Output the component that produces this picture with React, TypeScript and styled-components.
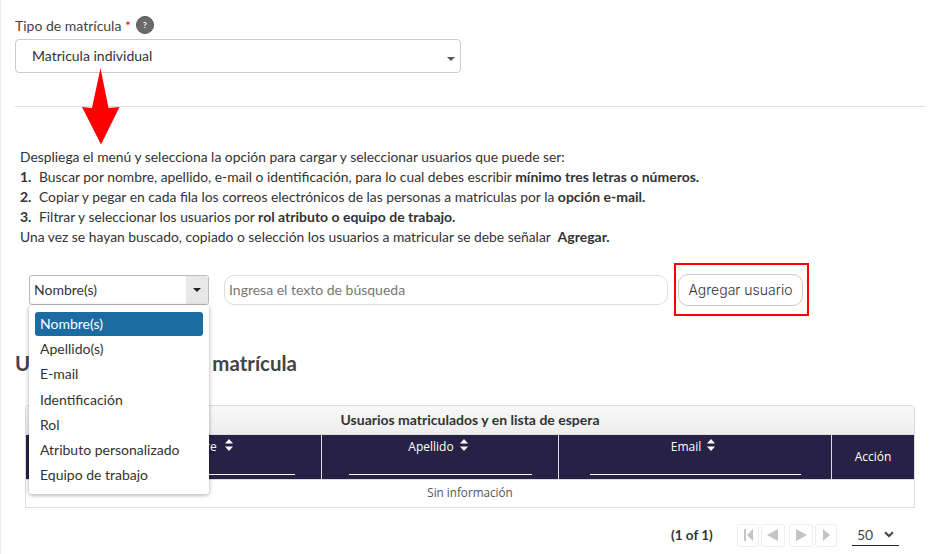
import { createGlobalStyle } from 'styled-components';
import styled from 'styled-components';

const GlobalStyle = createGlobalStyle`
    html, body {
        margin: 0;
        background: #fff;
        font-family: Lato, sans-serif;
        color: #333;
    }
`;

const options = ['Nombre(s)', 'Apellido(s)', 'E-mail', 'Identificación', 'Rol', 'Atributo personalizado', 'Equipo de trabajo'];

function SortIcon() {
    return (
        <SortSvg viewBox="0 0 8 12" width="8" height="12">
            <path d="M4 0 L8 4.6 H0 Z" fill="#fff" />
            <path d="M4 12 L8 7.4 H0 Z" fill="#fff" />
        </SortSvg>
    );
}

export default function App() {
    return (
        <Page>
            <GlobalStyle />
            <LabelRow>
                <FieldLabel>Tipo de matrícula <Req>*</Req></FieldLabel>
                <HelpBadge>?</HelpBadge>
            </LabelRow>
            <TypeSelect>
                Matricula individual
                <TypeCaret />
            </TypeSelect>
            <Divider />
            <BigArrow viewBox="0 0 40 78" width="40" height="78">
                <path d="M19.5 1 L27.5 41 L38.5 40 L20 77.5 L1 40 L11 41 Z" fill="#ff0000" />
            </BigArrow>
            <Instructions>
                <p>Despliega el menú y selecciona la opción para cargar y seleccionar usuarios que puede ser:</p>
                <p><Num>1.</Num>Buscar por nombre, apellido, e-mail o identificación, para lo cual debes escribir <b>mínimo tres letras o números.</b></p>
                <p><Num>2.</Num>Copiar y pegar en cada fila los correos electrónicos de las personas a matriculas por la <b>opción e-mail.</b></p>
                <p><Num>3.</Num>Filtrar y seleccionar los usuarios por <b>rol atributo o equipo de trabajo.</b></p>
                <p>Una vez se hayan buscado, copiado o selección los usuarios a matricular se debe señalar&nbsp; <b>Agregar.</b></p>
            </Instructions>
            <SearchRow>
                <FilterBox>
                    <FilterValue>Nombre(s)</FilterValue>
                    <FilterToggle><ToggleCaret /></FilterToggle>
                    <FilterMenu>
                        {options.map((o, i) => (
                            <FilterOption key={o} $active={i === 0}>{o}</FilterOption>
                        ))}
                    </FilterMenu>
                </FilterBox>
                <SearchInput placeholder="Ingresa el texto de búsqueda" readOnly />
                <Highlight>
                    <AddButton>Agregar usuario</AddButton>
                </Highlight>
            </SearchRow>
            <SectionTitle>Usuarios agregados a matrícula</SectionTitle>
            <TableWrap>
                <TableTitle>Usuarios matriculados y en lista de espera</TableTitle>
                <HeadRow>
                    <HeadCell $w={296} $pad={60}>
                        <HeadLabel $gap={8}>Nombre <SortIcon /></HeadLabel>
                        <FilterLine $w={183} />
                    </HeadCell>
                    <HeadCell $w={237}>
                        <HeadLabel>Apellido <SortIcon /></HeadLabel>
                        <FilterLine $w={183} />
                    </HeadCell>
                    <HeadCell $w={273}>
                        <HeadLabel>Email <SortIcon /></HeadLabel>
                        <FilterLine $w={211} />
                    </HeadCell>
                    <ActionCell>Acción</ActionCell>
                </HeadRow>
                <EmptyRow>Sin información</EmptyRow>
            </TableWrap>
            <Paginator>
                <PageInfo>(1 of 1)</PageInfo>
                <PageButtons>
                    <PageGroup>
                        <PageBtn $w={22}>
                            <svg viewBox="0 0 9 12" width="9" height="12"><path d="M0 0H2V12H0Z M9 0V12L3 6Z" fill="#c4c4c4" /></svg>
                        </PageBtn>
                        <PageBtn $w={24}>
                            <svg viewBox="0 0 12 12" width="12" height="12"><path d="M11 0V12L0 6Z" fill="#c4c4c4" /></svg>
                        </PageBtn>
                    </PageGroup>
                    <PageGroup>
                        <PageBtn $w={24}>
                            <svg viewBox="0 0 12 12" width="12" height="12"><path d="M1 0V12L12 6Z" fill="#c4c4c4" /></svg>
                        </PageBtn>
                        <PageBtn $w={22}>
                            <svg viewBox="0 0 7 12" width="7" height="12"><path d="M0 0V12L7 6Z" fill="#c4c4c4" /></svg>
                        </PageBtn>
                    </PageGroup>
                </PageButtons>
                <PerPage>
                    <span>50</span>
                    <svg viewBox="0 0 10 7" width="10" height="7"><path d="M1 1.2 L5 5 L9 1.2" fill="none" stroke="#444" strokeWidth="2" /></svg>
                </PerPage>
            </Paginator>
        </Page>
    );
}

const Page = styled.div`
    position: relative;
    box-sizing: border-box;
    width: 939px;
    height: 554px;
    overflow: hidden;
    padding: 15px 14px 0 15px;
    border-left: 1px solid #eee;
    margin-left: 0;
`;

const LabelRow = styled.div`
    display: flex;
    align-items: center;
    gap: 5px;
    height: 20px;
    margin-left: -1px;
`;

const FieldLabel = styled.label`
    font-size: 14px;
    color: #444;
`;

const Req = styled.span`
    color: #e00;
`;

const HelpBadge = styled.span`
    box-sizing: border-box;
    width: 18px;
    height: 18px;
    border-radius: 50%;
    background: #6b6b6b;
    border: 1px solid #555;
    color: #fff;
    font-size: 8px;
    font-weight: 700;
    display: flex;
    align-items: center;
    justify-content: center;
`;

const TypeSelect = styled.div`
    position: relative;
    box-sizing: border-box;
    margin: 4px 0 0 -1px;
    width: 446px;
    height: 34px;
    line-height: 32px;
    padding-left: 16px;
    border: 1px solid #ccc;
    border-radius: 4px;
    font-size: 14px;
    color: #333;
`;

const TypeCaret = styled.span`
    position: absolute;
    right: 5px;
    top: 17px;
    border-left: 4px solid transparent;
    border-right: 4px solid transparent;
    border-top: 4px solid #555;
`;

const Divider = styled.div`
    height: 1px;
    background: #ddd;
    margin: 33px 0 0 -1px;
`;

const BigArrow = styled.svg`
    position: absolute;
    left: 80px;
    top: 67px;
`;

const Instructions = styled.div`
    margin: 40px 0 0 4px;
    font-size: 13.85px;
    line-height: 20px;
    color: #333;

    p {
        margin: 0;
    }

    b {
        font-size: 14px;
    }
`;

const Num = styled.b`
    display: inline-block;
    width: 19px;
`;

const SearchRow = styled.div`
    display: flex;
    align-items: center;
    margin: 16px 0 0 13px;
`;

const FilterBox = styled.div`
    position: relative;
    box-sizing: border-box;
    display: flex;
    width: 180px;
    height: 30px;
    border: 1px solid #bbb;
    border-radius: 3px;
    background: #fff;
`;

const FilterValue = styled.div`
    flex: 1;
    font-size: 14px;
    line-height: 28px;
    padding-left: 4px;
    color: #333;
`;

const FilterToggle = styled.div`
    width: 22px;
    background: #e8e8e8;
    display: flex;
    align-items: center;
    justify-content: center;
`;

const ToggleCaret = styled.span`
    border-left: 4px solid transparent;
    border-right: 4px solid transparent;
    border-top: 4px solid #222;
`;

const FilterMenu = styled.div`
    position: absolute;
    z-index: 2;
    left: -1px;
    top: 29px;
    box-sizing: border-box;
    width: 180px;
    height: 189px;
    padding: 7.45px 6px 0;
    background: #fff;
    border-radius: 3px;
    box-shadow: 0 1px 4px rgba(0, 0, 0, 0.35);
`;

const FilterOption = styled.div<{ $active?: boolean }>`
    height: ${(p) => (p.$active ? '24px' : '25.2px')};
    margin-bottom: ${(p) => (p.$active ? '1.2px' : '0')};
    line-height: 24px;
    padding-left: 5px;
    font-size: 14px;
    border-radius: 3px;
    color: ${(p) => (p.$active ? '#fff' : '#333')};
    background: ${(p) => (p.$active ? '#1a6ca3' : 'transparent')};
`;

const SearchInput = styled.input`
    box-sizing: border-box;
    width: 444px;
    height: 30px;
    margin-left: 15px;
    padding: 0 4px;
    border: 1px solid #ddd;
    border-radius: 10px;
    outline: none;
    font-family: Lato, sans-serif;
    font-size: 14px;

    &::placeholder {
        color: #777;
    }
`;

const Highlight = styled.div`
    box-sizing: border-box;
    margin: 0 0 0 6px;
    width: 135px;
    height: 53px;
    border: 2px solid #f00;
    display: flex;
    align-items: center;
    justify-content: center;
`;

const AddButton = styled.button`
    box-sizing: border-box;
    width: 125px;
    height: 32px;
    margin-right: 2px;
    padding: 0;
    border: 1px solid #ccc;
    border-radius: 10px;
    background: #fff;
    font-family: Inter, sans-serif;
    font-size: 14px;
    font-weight: 300;
    color: #333;
`;

const SectionTitle = styled.h2`
    margin: 34px 0 0 -1px;
    font-size: 20.45px;
    font-weight: 700;
    line-height: 26px;
    color: #444;
    white-space: nowrap;
`;

const TableWrap = styled.div`
    box-sizing: border-box;
    width: 890px;
    margin: 29px 0 0 9px;
    border: 1px solid #ddd;
    border-radius: 3px 3px 0 0;
`;

const TableTitle = styled.div`
    height: 28px;
    line-height: 28px;
    text-align: center;
    font-size: 14px;
    font-weight: 700;
    color: #333;
    background: linear-gradient(#f8f8f8, #eeeeee);
    border-bottom: 1px solid #ddd;
`;

const HeadRow = styled.div`
    display: flex;
    height: 44px;
    background: #262145;
    border-bottom: 1px solid #ddd;
`;

const HeadCell = styled.div<{ $w: number; $pad?: number }>`
    box-sizing: border-box;
    width: ${(p) => p.$w}px;
    padding-left: ${(p) => p.$pad ?? 0}px;
    border-right: 1px solid #ddd;
    display: flex;
    flex-direction: column;
    align-items: center;
    padding-top: 3px;
    color: #fff;
`;

const HeadLabel = styled.div<{ $gap?: number }>`
    display: flex;
    align-items: flex-start;
    gap: ${(p) => p.$gap ?? 6}px;
    padding-right: 4px;
    font-family: 'Open Sans', sans-serif;
    font-size: 12px;
    line-height: 18px;
`;

const SortSvg = styled.svg`
    margin-top: 1px;
`;

const FilterLine = styled.div<{ $w: number }>`
    width: ${(p) => p.$w}px;
    height: 1px;
    margin-top: 18px;
    background: #fff;
`;

const ActionCell = styled.div`
    flex: 1;
    display: flex;
    align-items: center;
    justify-content: center;
    padding-bottom: 2px;
    color: #fff;
    font-family: 'Open Sans', sans-serif;
    font-size: 12px;
`;

const EmptyRow = styled.div`
    height: 27px;
    line-height: 24px;
    text-align: center;
    font-family: 'Open Sans', sans-serif;
    font-size: 11.7px;
    color: #555;
`;

const Paginator = styled.div`
    display: flex;
    align-items: center;
    height: 26px;
    margin: 14px 0 0 655px;
`;

const PageInfo = styled.span`
    width: 66px;
    font-size: 13.5px;
    font-weight: 700;
    color: #333;
`;

const PageButtons = styled.div`
    display: flex;
    gap: 4px;
`;

const PageGroup = styled.div`
    display: flex;
    gap: 2px;
`;

const PageBtn = styled.div<{ $w: number }>`
    box-sizing: border-box;
    width: ${(p) => p.$w}px;
    height: 23px;
    border: 1px solid #eee;
    border-radius: 3px;
    display: flex;
    align-items: center;
    justify-content: center;
`;

const PerPage = styled.div`
    box-sizing: border-box;
    display: flex;
    align-items: center;
    justify-content: space-between;
    width: 47px;
    height: 22px;
    margin-left: 15px;
    padding: 0 5px;
    border-bottom: 1px solid #262145;
    font-size: 14px;
    color: #444;
`;
